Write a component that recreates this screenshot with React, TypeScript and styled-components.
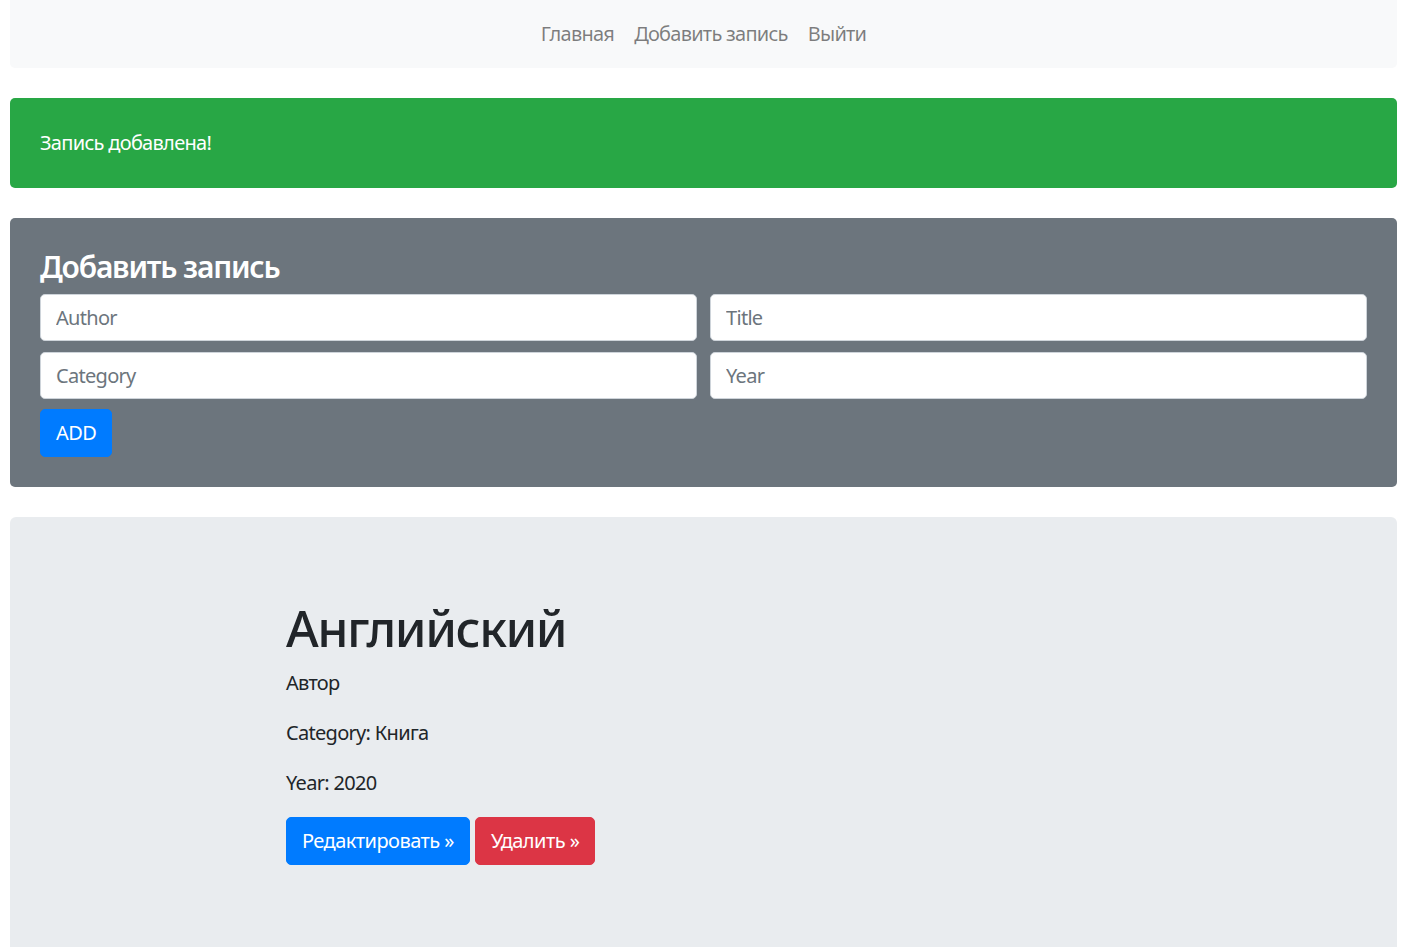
import React from "react";
import styled, { createGlobalStyle } from "styled-components";

const Global = createGlobalStyle`
  html, body { margin: 0; padding: 0; background: #fff; overflow: hidden; }
  body { font-family: "Noto Sans", "Open Sans", sans-serif; font-size: 20px; line-height: 1.5; color: #212529; }
  * { box-sizing: border-box; }
`;

const Page = styled.div`
  display: flex;
  flex-direction: column;
  gap: 30px;
  padding: 0 24px 0 10px;
`;

const Navbar = styled.nav`
  height: 68px;
  background: #f8f9fa;
  border-radius: 0 0 5px 5px;
  display: flex;
  align-items: center;
  justify-content: center;
`;

const NavLink = styled.a`
  padding: 0 10px;
  color: rgba(0, 0, 0, 0.5);
  text-decoration: none;
  font-size: 20px;
  line-height: 30px;
  letter-spacing: -0.75px;
`;

const Alert = styled.div`
  background: #28a745;
  color: #fff;
  border-radius: 5px;
  padding: 30px;
  font-size: 20px;
  line-height: 30px;
  letter-spacing: -0.7px;
`;

const FormCard = styled.section`
  background: #6c757d;
  border-radius: 5px;
  padding: 30px;
  display: flex;
  flex-direction: column;
  gap: 10px;
`;

const FormTitle = styled.h4`
  margin: 0 0 -2px;
  color: #fff;
  font-size: 30px;
  line-height: 38px;
  font-weight: 600;
  letter-spacing: -1.2px;
`;

const FieldGrid = styled.div`
  display: grid;
  grid-template-columns: 1fr 1fr;
  column-gap: 13px;
  row-gap: 11px;
`;

const Input = styled.input`
  height: 47px;
  border: 1px solid #ced4da;
  border-radius: 5px;
  background: #fff;
  padding: 0 15px;
  font-family: inherit;
  font-size: 20px;
  letter-spacing: -0.7px;
  color: #495057;
  &::placeholder { color: #6c757d; opacity: 1; }
`;

const Row = styled.div`
  display: flex;
  gap: 5px;
`;

const Button = styled.button<{ $tone: "primary" | "danger" }>`
  height: 48px;
  padding: 0 15px;
  border: 1px solid ${(p) => (p.$tone === "primary" ? "#007bff" : "#dc3545")};
  background: ${(p) => (p.$tone === "primary" ? "#007bff" : "#dc3545")};
  color: #fff;
  border-radius: 5px;
  font-family: inherit;
  font-size: 20px;
  letter-spacing: -0.55px;
  line-height: 30px;
  cursor: pointer;
`;

const Jumbotron = styled.section`
  background: #e9ecef;
  border-radius: 6px;
  padding: 81px 40px 80px 276px;
  min-height: 470px;
`;

const Heading = styled.h1`
  margin: 0 0 10px;
  font-size: 50px;
  line-height: 60px;
  font-weight: 500;
  letter-spacing: -1.5px;
  color: #212529;
`;

const Lead = styled.p`
  margin: 0 0 20px;
  font-size: 20px;
  line-height: 30px;
  letter-spacing: -0.7px;
`;

const Actions = styled(Row)`
  margin-top: -1px;
`;

export default function App() {
  return (
    <>
      <Global />
      <Page>
        <Navbar>
          <NavLink href="#">Главная</NavLink>
          <NavLink href="#">Добавить запись</NavLink>
          <NavLink href="#">Выйти</NavLink>
        </Navbar>
        <Alert>Запись добавлена!</Alert>
        <FormCard>
          <FormTitle>Добавить запись</FormTitle>
          <FieldGrid>
            <Input placeholder="Author" />
            <Input placeholder="Title" />
            <Input placeholder="Category" />
            <Input placeholder="Year" />
          </FieldGrid>
          <Row>
            <Button $tone="primary">ADD</Button>
          </Row>
        </FormCard>
        <Jumbotron>
          <Heading>Английский</Heading>
          <Lead>Автор</Lead>
          <Lead>Category: Книга</Lead>
          <Lead>Year: 2020</Lead>
          <Actions>
            <Button $tone="primary">Редактировать »</Button>
            <Button $tone="danger">Удалить »</Button>
          </Actions>
        </Jumbotron>
      </Page>
    </>
  );
}
